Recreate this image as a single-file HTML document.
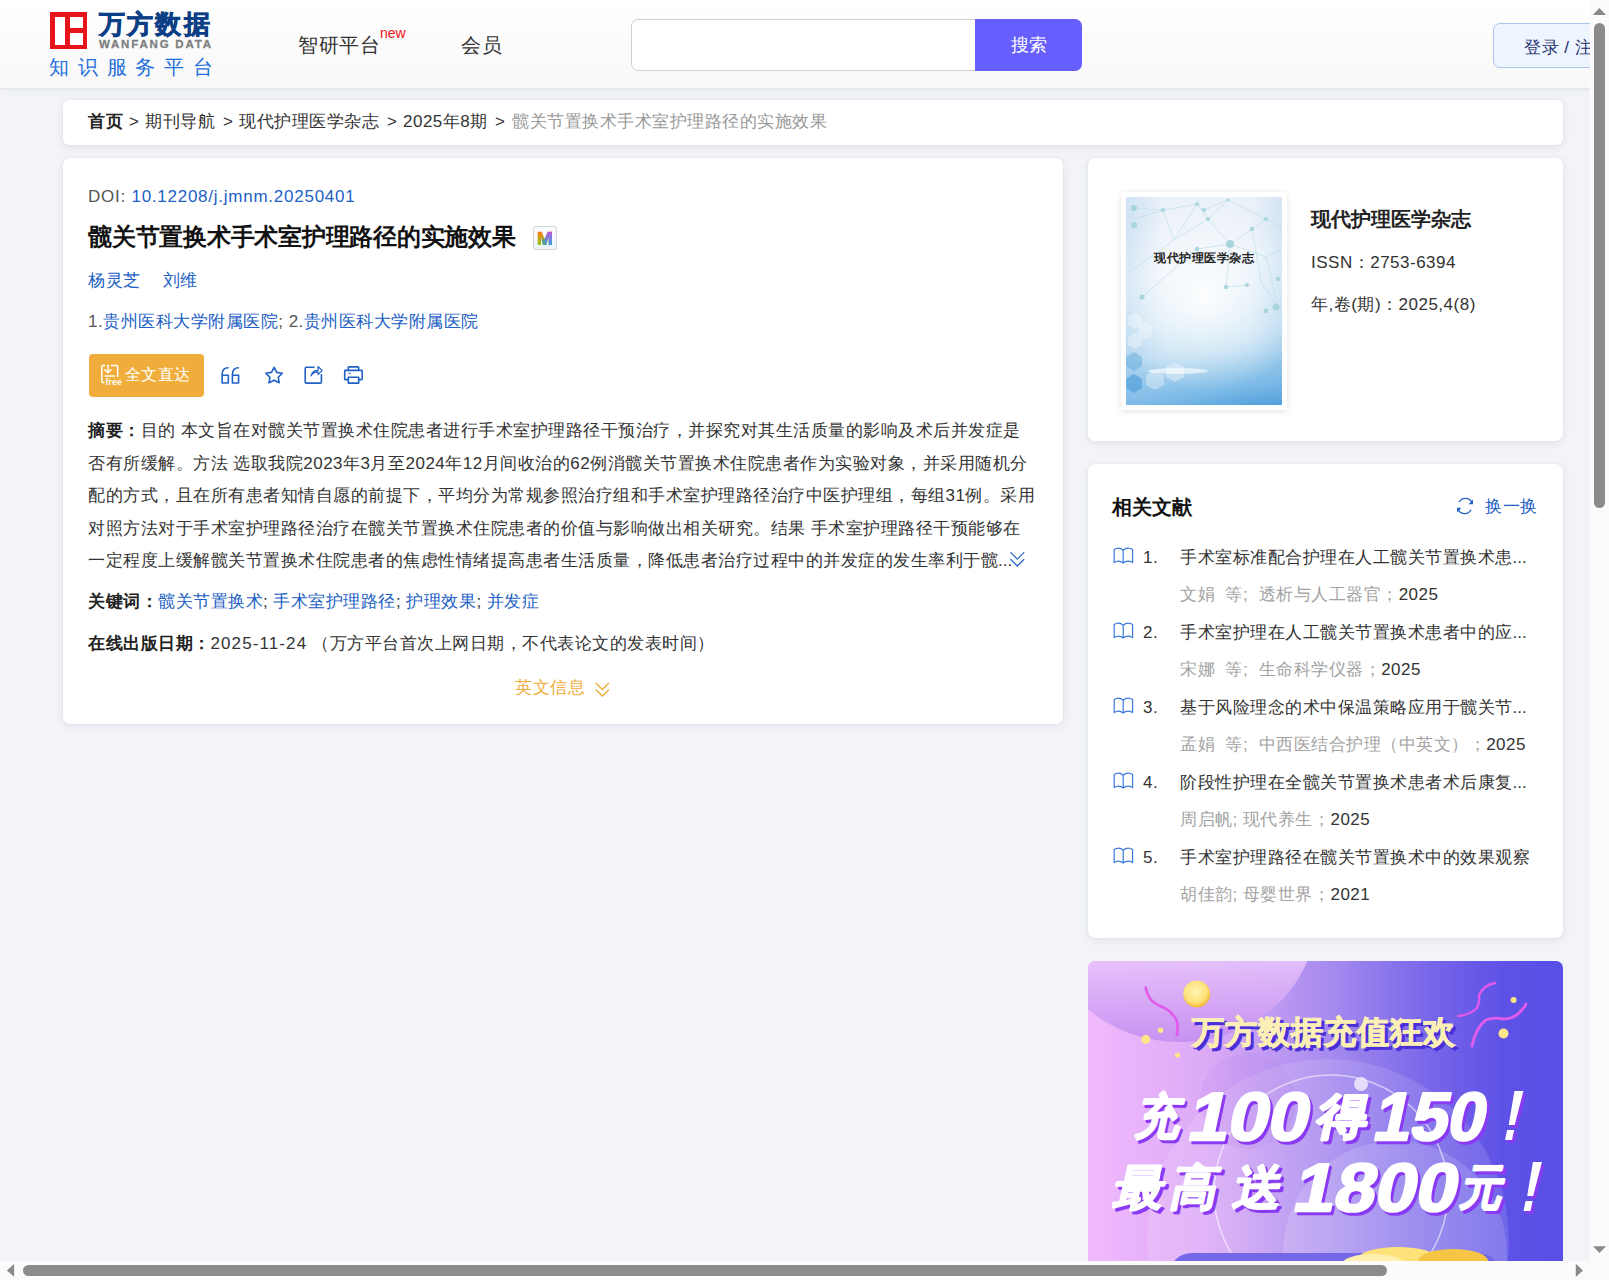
<!DOCTYPE html>
<html><head><meta charset="utf-8">
<style>
*{margin:0;padding:0;box-sizing:border-box}
html,body{width:1609px;height:1280px;overflow:hidden}
body{background:#f2f4f8;font-family:"Liberation Sans",sans-serif;color:#333;position:relative;font-size:17.5px}
.abs{position:absolute;white-space:nowrap}
#hdr{position:absolute;left:0;top:0;width:1590px;height:88px;background:linear-gradient(#ffffff,#f8f8f9);box-shadow:0 0 2px rgba(20,30,60,0.08),0 1px 8px rgba(20,30,60,0.07)}
.card{position:absolute;background:#fff;border-radius:7px;box-shadow:0 0 2px rgba(20,30,60,0.07),0 2px 9px rgba(20,30,60,0.08)}
.blue{color:#2160c4}
.gray{color:#999}
.ab{left:88px;line-height:32.5px;color:#333}
.t17{font-size:17px;letter-spacing:0.5px}
body{text-spacing-trim:space-all}
</style></head><body>
<div id="hdr">
  <!-- logo -->
  <div class="abs" style="left:50px;top:12px;width:37px;height:37px;background:#e7141b"></div>
  <div class="abs" style="left:54.5px;top:16.5px;width:10.5px;height:28px;background:#fff"></div>
  <div class="abs" style="left:69.5px;top:16.5px;width:13.5px;height:11.5px;background:#fff"></div>
  <div class="abs" style="left:69.5px;top:32.5px;width:13.5px;height:12px;background:#fff"></div>
  <div class="abs" style="left:99px;top:4px;font-size:26px;font-weight:bold;color:#0d3f86;line-height:40px;letter-spacing:2.2px;-webkit-text-stroke:0.7px #0d3f86">万方数据</div>
  <div class="abs" style="left:99px;top:37px;font-size:11.5px;font-weight:bold;color:#7f7f7f;letter-spacing:1.8px;line-height:14px;-webkit-text-stroke:0.3px #7f7f7f">WANFANG DATA</div>
  <div class="abs" style="left:49px;top:54px;font-size:19.5px;color:#1f6fd9;letter-spacing:8.8px;line-height:26px">知识服务平台</div>
  <!-- nav -->
  <div class="abs" style="left:298px;top:31px;font-size:20px;letter-spacing:0.6px;color:#333;line-height:28px">智研平台</div>
  <div class="abs" style="left:380px;top:25px;font-size:14px;color:#f01010;line-height:16px">new</div>
  <div class="abs" style="left:461px;top:31px;font-size:20px;letter-spacing:0.5px;color:#333;line-height:28px">会员</div>
  <!-- search -->
  <div class="abs" style="left:631px;top:19px;width:350px;height:52px;border:1px solid #cfcfcf;border-radius:7px 0 0 7px;background:#fff"></div>
  <div class="abs" style="left:975px;top:19px;width:107px;height:52px;background:#665ffd;border-radius:0 7px 7px 0;color:#fff;font-size:17.5px;line-height:52px;text-align:center">搜索</div>
  <!-- login -->
  <div class="abs" style="left:1493px;top:23px;width:140px;height:45px;background:#eef5fe;border:1px solid #a9c4ee;border-radius:7px;color:#1f2e6e;font-size:17px;letter-spacing:0.5px;line-height:47px;padding-left:30px">登录 / 注册</div>
</div>

<!-- breadcrumb -->
<div class="card" style="left:63px;top:100px;width:1500px;height:45px;border-radius:6px"></div>
<div class="abs t17" style="left:88px;top:108px;line-height:28px;color:#222"><b>首页</b></div>
<div class="abs t17" style="left:129px;top:108px;line-height:28px;color:#333">&gt;</div>
<div class="abs t17" style="left:145px;top:108px;line-height:28px;color:#333">期刊导航</div>
<div class="abs t17" style="left:223px;top:108px;line-height:28px;color:#333">&gt;</div>
<div class="abs t17" style="left:239px;top:108px;line-height:28px;color:#333">现代护理医学杂志</div>
<div class="abs t17" style="left:387px;top:108px;line-height:28px;color:#333">&gt;</div>
<div class="abs t17" style="left:403px;top:108px;line-height:28px;color:#333">2025年8期</div>
<div class="abs t17" style="left:495px;top:108px;line-height:28px;color:#333">&gt;</div>
<div class="abs t17" style="left:512px;top:108px;line-height:28px;color:#999">髋关节置换术手术室护理路径的实施效果</div>

<!-- main card -->
<div class="card" style="left:63px;top:158px;width:1000px;height:566px"></div>
<div class="abs t17" style="left:88px;top:183px;line-height:28px;color:#555;letter-spacing:0.75px">DOI: <span class="blue">10.12208/j.jmnm.20250401</span></div>
<div class="abs" style="left:88px;top:220px;line-height:34px;font-size:24px;letter-spacing:-0.25px;font-weight:bold;color:#111">髋关节置换术手术室护理路径的实施效果</div>
<div class="abs" style="left:534px;top:226px;width:23px;height:24px;border:1px solid #ddd;border-radius:3px;background:linear-gradient(#fff,#f3f3f3)"></div>
<div class="abs t17" style="left:88px;top:267px;line-height:28px"><span class="blue">杨灵芝</span><span class="blue" style="margin-left:22px">刘维</span></div>
<div class="abs t17" style="left:88px;top:308px;line-height:28px;color:#555">1.<span class="blue">贵州医科大学附属医院</span>; 2.<span class="blue">贵州医科大学附属医院</span></div>
<div class="abs" style="left:89px;top:354px;width:115px;height:43px;background:#f0ad3b;border-radius:4px"></div>
<div class="abs" style="left:125px;top:361px;line-height:28px;font-size:16px;letter-spacing:0.25px;color:#fff">全文直达</div>
<div class="abs t17 ab" style="top:415.0px"><b style="color:#222">摘要：</b>目的 本文旨在对髋关节置换术住院患者进行手术室护理路径干预治疗，并探究对其生活质量的影响及术后并发症是</div>
<div class="abs t17 ab" style="top:447.5px">否有所缓解。方法 选取我院2023年3月至2024年12月间收治的62例消髋关节置换术住院患者作为实验对象，并采用随机分</div>
<div class="abs t17 ab" style="top:480.0px">配的方式，且在所有患者知情自愿的前提下，平均分为常规参照治疗组和手术室护理路径治疗中医护理组，每组31例。采用</div>
<div class="abs t17 ab" style="top:512.5px">对照方法对于手术室护理路径治疗在髋关节置换术住院患者的价值与影响做出相关研究。结果 手术室护理路径干预能够在</div>
<div class="abs t17 ab" style="top:545.0px">一定程度上缓解髋关节置换术住院患者的焦虑性情绪提高患者生活质量，降低患者治疗过程中的并发症的发生率利于髋<span style="letter-spacing:0">...</span></div>
<div class="abs t17" style="left:88px;top:588px;line-height:28px;color:#333"><b style="color:#222">关键词：</b><span class="blue">髋关节置换术</span>; <span class="blue">手术室护理路径</span>; <span class="blue">护理效果</span>; <span class="blue">并发症</span></div>
<div class="abs t17" style="left:88px;top:630px;line-height:28px;color:#333"><b style="color:#222">在线出版日期：</b><span style="letter-spacing:1.1px">2025-11-24</span> （万方平台首次上网日期，不代表论文的发表时间）</div>
<div class="abs t17" style="left:515px;top:674px;line-height:28px;color:#f0ad3b">英文信息</div>

<!-- icons -->
<svg class="abs" style="left:0;top:0" width="1609" height="800" viewBox="0 0 1609 800" fill="none">
  <!-- free doc icon -->
  <g stroke="#fff" stroke-width="1.5" stroke-linecap="round" stroke-linejoin="round">
    <path d="M104.8 365.6 H103 Q101.8 365.6 101.8 366.8 V381.3 Q101.8 382.5 103 382.5 H103.8"/>
    <path d="M111.2 365.6 H116.5 Q117.7 365.6 117.7 366.8 V376.4"/>
    <path d="M107.9 365.3 V372.3 M104.6 369.8 L107.9 372.6 L111.1 369.8"/>
    <path d="M105.2 376 H114.4"/>
  </g>
  <text x="105.6" y="384.6" fill="#fff" font-family="Liberation Sans" font-weight="bold" font-size="8.6" letter-spacing="0.1">free</text>
  <!-- quote 66 -->
  <g stroke="#2160c4" stroke-width="1.6" stroke-linejoin="round">
    <path d="M228.6 367.8 Q222.1 367.6 222.1 374.5 V383 H228.3 V375.2 H222.1"/>
    <path d="M238.9 367.8 Q232.4 367.6 232.4 374.5 V383 H238.6 V375.2 H232.4"/>
  </g>
  <!-- star -->
  <path d="M274.1 367.3 L276.7 372.4 L282.3 373.2 L278.3 377.3 L279.2 382.8 L274.1 380.3 L269 382.8 L269.9 377.3 L265.9 373.2 L271.5 372.4 Z" stroke="#2160c4" stroke-width="1.6" stroke-linejoin="round"/>
  <!-- share -->
  <g stroke="#2160c4" stroke-width="1.6" stroke-linejoin="round" stroke-linecap="round">
    <path d="M314 367.3 H306.2 Q305.2 367.3 305.2 368.3 V382.2 Q305.2 383.1 306.2 383.1 H320.4 Q321.4 383.1 321.4 382.2 V374.8"/>
  </g>
  <path d="M311 375.8 Q312.5 370.3 318 370.3 V366.5 L322.2 370.6 L318 374.6 V371.9 Q313.8 371.6 311 375.8 Z" stroke="#2160c4" stroke-width="1.2" stroke-linejoin="round" fill="none"/>
  <!-- print -->
  <g stroke="#2160c4" stroke-width="1.6" stroke-linejoin="round">
    <path d="M348.3 370.4 V367.6 Q348.3 366.9 349 366.9 H358 Q358.7 366.9 358.7 367.6 V370.4"/>
    <path d="M348.3 379.6 H345.3 Q344.7 379.6 344.7 379 V371 Q344.7 370.4 345.3 370.4 H361.6 Q362.2 370.4 362.2 371 V379 Q362.2 379.6 361.6 379.6 H358.7"/>
    <path d="M348.3 377.3 H358.7 V383.1 H348.3 Z"/>
    <path d="M348.5 373.3 H350.6" stroke-width="1.2"/>
  </g>
  <!-- abstract expand chevron -->
  <g stroke="#2a6ad0" stroke-width="1.3" stroke-linecap="round" stroke-linejoin="miter">
    <path d="M1010.8 552.6 L1017.3 559.1 L1023.8 552.6"/>
    <path d="M1010.8 559.5 L1017.3 566 L1023.8 559.5"/>
  </g>
  <!-- english info chevron -->
  <g stroke="#f0ad3b" stroke-width="1.4" stroke-linecap="round">
    <path d="M596.2 683.3 L602.4 689.4 L608.6 683.3"/>
    <path d="M596.2 689.9 L602.4 696 L608.6 689.9"/>
  </g>
</svg>
<!-- M icon -->
<div class="abs" style="left:533px;top:226px;width:24px;height:24px;border:1.5px solid #d6d6d6;border-radius:3px;background:linear-gradient(#fbfcff,#eef3fb)"></div>
<svg class="abs" style="left:537px;top:231px" width="16" height="15" viewBox="0 0 16 15">
  <defs>
   <linearGradient id="mg1" x1="0" y1="0" x2="0" y2="1"><stop offset="0" stop-color="#ff7a10"/><stop offset="1" stop-color="#8cc820"/></linearGradient>
   <linearGradient id="mg2" x1="0" y1="0" x2="0" y2="1"><stop offset="0" stop-color="#b45ad8"/><stop offset="1" stop-color="#3ea0e8"/></linearGradient>
  </defs>
  <path d="M0.7 0.8 H4.6 L7.6 8 L10.8 0.8 H14.9 V14 H11.6 V6.2 L9.2 14 H6 L4 6.4 V14 H0.7 Z" fill="url(#mg1)"/>
  <path d="M10.8 0.8 H14.9 V14 H11.6 V6.2 L9.2 14 H7.6 L7.6 8 Z" fill="url(#mg2)"/>
  <path d="M6 14 L4.6 8.5 L7.6 8 L9.2 14 Z" fill="#55a090"/>
</svg>

<!-- right card 1 -->
<div class="card" style="left:1088px;top:158px;width:475px;height:283px"></div>
<div class="abs" style="left:1121px;top:192px;width:166px;height:218px;background:#fff;box-shadow:0 1px 6px rgba(0,0,0,0.12)"></div>
<div class="abs" style="left:1126px;top:197px;width:156px;height:208px;overflow:hidden;background:radial-gradient(ellipse 70% 45% at 50% 48%,rgba(255,255,255,0.95),rgba(255,255,255,0) 100%),linear-gradient(90deg,rgba(120,180,230,0.25),rgba(120,180,230,0) 25%,rgba(120,180,230,0) 80%,rgba(120,180,230,0.2)),linear-gradient(170deg,#edf2f9 0%,#e9f0f8 35%,#bcdcf1 70%,#7ab9e6 90%,#4c9ddc 100%)">
  <svg class="abs" style="left:0;top:0" width="156" height="208" viewBox="0 0 156 208">
    <g stroke="#bfe0e8" stroke-width="0.7" fill="none">
      <path d="M8 11 L37 13 L71 7 L78 13 L102 3 L140 22 L158 32 M37 13 L48 43 L71 7 M37 13 L8 22 M71 7 L82 22 L102 3 M82 22 L104 47 L126 32 L140 22 M48 43 L82 22 M48 43 L0 78 M104 47 L71 52 L16 100 M104 47 L140 60 L158 50 M104 47 L100 90 L121 88 M140 60 L152 110 M126 32 L135 85 L158 120"/>
    </g>
    <g fill="#a8d6df">
      <circle cx="8" cy="11" r="3"/><circle cx="8" cy="28" r="3"/><circle cx="37" cy="13" r="2"/><circle cx="71" cy="7" r="2"/><circle cx="78" cy="13" r="2"/><circle cx="102" cy="3" r="1.6"/><circle cx="82" cy="22" r="2"/><circle cx="104" cy="47" r="4"/><circle cx="126" cy="32" r="2.2"/><circle cx="140" cy="22" r="2"/><circle cx="71" cy="52" r="2.2"/><circle cx="16" cy="100" r="2.6"/><circle cx="100" cy="90" r="2.2"/><circle cx="121" cy="88" r="2"/><circle cx="152" cy="82" r="2.2"/><circle cx="150" cy="110" r="3.5"/><circle cx="140" cy="114" r="2.4"/><circle cx="110" cy="57" r="1.8"/>
    </g>
    <g fill="#ffffff" opacity="0.35">
      <path d="M2 120 l7 -4 l7 4 v8 l-7 4 l-7 -4z"/><path d="M12 130 l7 -4 l7 4 v8 l-7 4 l-7 -4z"/><path d="M2 140 l7 -4 l7 4 v8 l-7 4 l-7 -4z"/><path d="M20 178 l9 -5 l9 5 v10 l-9 5 l-9 -5z"/><path d="M40 170 l9 -5 l9 5 v10 l-9 5 l-9 -5z"/>
    </g>
    <g fill="#3f97d8" opacity="0.55">
      <path d="M0 160 l8 -5 l8 5 v9 l-8 5 l-8 -5z" opacity="0.6"/><path d="M0 182 l8 -5 l8 5 v9 l-8 5 l-8 -5z"/>
    </g>
    <ellipse cx="52" cy="174" rx="30" ry="3" fill="#ffffff" opacity="0.6"/>
  </svg>
</div>
<div class="abs" style="left:1154px;top:248px;line-height:20px;font-size:12px;letter-spacing:0.5px;font-weight:bold;color:#222">现代护理医学杂志</div>
<div class="abs" style="left:1311px;top:204px;line-height:30px;font-size:20px;font-weight:bold;color:#222">现代护理医学杂志</div>
<div class="abs t17" style="left:1311px;top:249px;line-height:28px;color:#333">ISSN：2753-6394</div>
<div class="abs t17" style="left:1311px;top:291px;line-height:28px;color:#333">年,卷(期)：2025,4(8)</div>

<!-- right card 2 -->
<div class="card" style="left:1088px;top:464px;width:475px;height:474px"></div>
<div class="abs" style="left:1112px;top:492px;line-height:30px;font-size:20px;font-weight:bold;color:#111">相关文献</div>
<svg class="abs" style="left:1455px;top:496px" width="20" height="20" viewBox="0 0 20 20" fill="none">
  <path d="M17.2 7.2 A7.2 7.2 0 0 0 4 6.2" stroke="#2160c4" stroke-width="1.3"/>
  <path d="M2.8 12.8 A7.2 7.2 0 0 0 16 13.8" stroke="#2160c4" stroke-width="1.3"/>
  <path d="M18 3.6 L18 8.2 L13.6 8.2 Z" fill="#2160c4"/>
  <path d="M2 16.4 L2 11.8 L6.4 11.8 Z" fill="#2160c4"/>
</svg>
<div class="abs t17 blue" style="left:1485px;top:493px;line-height:28px">换一换</div>
<svg class="abs" style="left:1112px;top:547px" width="22" height="18" viewBox="0 0 22 18" fill="none"><path d="M11.2 3.2 Q7 -0.6 2.2 2.6 V15.6 Q7 12.6 11.2 16 Q15.4 12.6 20.6 15.6 V2.6 Q15.4 -0.6 11.2 3.2 Z M11.2 3.2 V16" stroke="#3a78dc" stroke-width="1.2" stroke-linejoin="round"/></svg>
<div class="abs t17" style="left:1143px;top:544px;line-height:28px;color:#333">1.</div>
<div class="abs t17" style="left:1180px;top:544px;line-height:28px;color:#333">手术室标准配合护理在人工髋关节置换术患<span style="letter-spacing:0">...</span></div>
<div class="abs t17" style="left:1180px;top:581px;line-height:28px;color:#a3a3a3">文娟&nbsp;&nbsp;等;&nbsp;&nbsp;透析与人工器官；<span style="color:#333">2025</span></div>
<svg class="abs" style="left:1112px;top:622px" width="22" height="18" viewBox="0 0 22 18" fill="none"><path d="M11.2 3.2 Q7 -0.6 2.2 2.6 V15.6 Q7 12.6 11.2 16 Q15.4 12.6 20.6 15.6 V2.6 Q15.4 -0.6 11.2 3.2 Z M11.2 3.2 V16" stroke="#3a78dc" stroke-width="1.2" stroke-linejoin="round"/></svg>
<div class="abs t17" style="left:1143px;top:619px;line-height:28px;color:#333">2.</div>
<div class="abs t17" style="left:1180px;top:619px;line-height:28px;color:#333">手术室护理在人工髋关节置换术患者中的应<span style="letter-spacing:0">...</span></div>
<div class="abs t17" style="left:1180px;top:656px;line-height:28px;color:#a3a3a3">宋娜&nbsp;&nbsp;等;&nbsp;&nbsp;生命科学仪器；<span style="color:#333">2025</span></div>
<svg class="abs" style="left:1112px;top:697px" width="22" height="18" viewBox="0 0 22 18" fill="none"><path d="M11.2 3.2 Q7 -0.6 2.2 2.6 V15.6 Q7 12.6 11.2 16 Q15.4 12.6 20.6 15.6 V2.6 Q15.4 -0.6 11.2 3.2 Z M11.2 3.2 V16" stroke="#3a78dc" stroke-width="1.2" stroke-linejoin="round"/></svg>
<div class="abs t17" style="left:1143px;top:694px;line-height:28px;color:#333">3.</div>
<div class="abs t17" style="left:1180px;top:694px;line-height:28px;color:#333">基于风险理念的术中保温策略应用于髋关节<span style="letter-spacing:0">...</span></div>
<div class="abs t17" style="left:1180px;top:731px;line-height:28px;color:#a3a3a3">孟娟&nbsp;&nbsp;等;&nbsp;&nbsp;中西医结合护理（中英文）；<span style="color:#333">2025</span></div>
<svg class="abs" style="left:1112px;top:772px" width="22" height="18" viewBox="0 0 22 18" fill="none"><path d="M11.2 3.2 Q7 -0.6 2.2 2.6 V15.6 Q7 12.6 11.2 16 Q15.4 12.6 20.6 15.6 V2.6 Q15.4 -0.6 11.2 3.2 Z M11.2 3.2 V16" stroke="#3a78dc" stroke-width="1.2" stroke-linejoin="round"/></svg>
<div class="abs t17" style="left:1143px;top:769px;line-height:28px;color:#333">4.</div>
<div class="abs t17" style="left:1180px;top:769px;line-height:28px;color:#333">阶段性护理在全髋关节置换术患者术后康复<span style="letter-spacing:0">...</span></div>
<div class="abs t17" style="left:1180px;top:806px;line-height:28px;color:#a3a3a3">周启帆; 现代养生；<span style="color:#333">2025</span></div>
<svg class="abs" style="left:1112px;top:847px" width="22" height="18" viewBox="0 0 22 18" fill="none"><path d="M11.2 3.2 Q7 -0.6 2.2 2.6 V15.6 Q7 12.6 11.2 16 Q15.4 12.6 20.6 15.6 V2.6 Q15.4 -0.6 11.2 3.2 Z M11.2 3.2 V16" stroke="#3a78dc" stroke-width="1.2" stroke-linejoin="round"/></svg>
<div class="abs t17" style="left:1143px;top:844px;line-height:28px;color:#333">5.</div>
<div class="abs t17" style="left:1180px;top:844px;line-height:28px;color:#333">手术室护理路径在髋关节置换术中的效果观察</div>
<div class="abs t17" style="left:1180px;top:881px;line-height:28px;color:#a3a3a3">胡佳韵; 母婴世界；<span style="color:#333">2021</span></div>

<!-- banner -->
<div class="abs" style="left:1088px;top:961px;width:475px;height:300px;border-radius:7px 7px 0 0;overflow:hidden;background:linear-gradient(90deg,#f1b9fd 0%,#dcaaf6 25%,#a88cef 50%,#7866e9 72%,#5d51e6 88%,#5a4fe5 100%)">
  <svg class="abs" style="left:0;top:0" width="475" height="300" viewBox="0 0 475 300">
    <defs>
      <linearGradient id="bgE" gradientUnits="userSpaceOnUse" x1="0" y1="0" x2="0" y2="82"><stop offset="0" stop-color="#e6c2fb"/><stop offset="1" stop-color="#c48df0"/></linearGradient>
      <radialGradient id="coin" cx="0.45" cy="0.4" r="0.6"><stop offset="0" stop-color="#fff3b0"/><stop offset="0.7" stop-color="#fde27a"/><stop offset="1" stop-color="#f2b735"/></radialGradient>
    </defs>
    <ellipse cx="92" cy="-41" rx="135" ry="122" fill="url(#bgE)" opacity="0.9"/>
    <circle cx="240" cy="279" r="181" fill="#ffffff" opacity="0.12"/>
    <circle cx="307" cy="292" r="112" fill="#ffffff" opacity="0.14"/>
    <circle cx="160" cy="140" r="48" fill="#8a5ae0" opacity="0.07"/>
    
    <circle cx="243" cy="231" r="117" fill="none" stroke="#ffffff" stroke-width="1.6" opacity="0.55"/>
    <circle cx="273" cy="123" r="7" fill="#ece4fc" opacity="0.9"/>
    <circle cx="108.7" cy="33" r="13.5" fill="url(#coin)"/>
    <circle cx="57.7" cy="78.4" r="4.5" fill="#fde58a"/>
    <circle cx="72.5" cy="69.2" r="2.8" fill="#fde58a"/>
    <circle cx="89.5" cy="94" r="2.6" fill="#fde58a"/>
    <circle cx="425.6" cy="39" r="3" fill="#fde58a"/>
    <circle cx="415.5" cy="72.5" r="5" fill="#fde58a"/>
    <path d="M57.7 26.6 Q60 40 71 44.4 Q82 48 88 58 Q91 66 88.8 74" stroke="#e258ea" stroke-width="2.6" fill="none" stroke-linecap="round"/>
    <path d="M370 55 Q382 54 389 47 Q392 40 391 34 Q396 24 407 22" stroke="#e258ea" stroke-width="2.4" fill="none" stroke-linecap="round"/>
    <path d="M384 85 Q388 66 398 59 Q406 56 415 58 Q425 58 431 52 Q437 46 438 43" stroke="#e45cec" stroke-width="2.8" fill="none" stroke-linecap="round"/>
    <rect x="82" y="292" width="330" height="40" rx="22" fill="#7467e8"/>
    <ellipse cx="310" cy="298" rx="40" ry="12" fill="#fde27a"/>
    <ellipse cx="365" cy="300" rx="35" ry="12" fill="#f6c545"/>
    <ellipse cx="285" cy="302" rx="30" ry="9" fill="#fff0b0"/>
  </svg>
  <svg class="abs" style="left:0;top:0" width="475" height="300" viewBox="0 0 475 300">
<text x="106.5" y="85" font-family="Liberation Sans" font-weight="bold" font-size="32" fill="#4a30d8" stroke="#4a30d8" stroke-width="1" letter-spacing="1">万方数据充值狂欢</text>
<text x="104" y="82" font-family="Liberation Sans" font-weight="bold" font-size="32" fill="#fcefb5" stroke="#fcefb5" stroke-width="1" letter-spacing="1">万方数据充值狂欢</text>
<g transform="translate(49.2 175.4) skewX(-12)"><text x="0" y="0" font-family="Liberation Sans" font-weight="bold" font-size="48" fill="#8a3af3" stroke="#8a3af3" stroke-width="2.6" stroke-linejoin="round" textLength="44.0" lengthAdjust="spacingAndGlyphs">充</text></g>
<g transform="translate(100.0 182.1) skewX(-12)"><text x="0" y="0" font-family="Liberation Sans" font-weight="bold" font-size="68" fill="#8a3af3" stroke="#8a3af3" stroke-width="2.4" stroke-linejoin="round" textLength="120.5" lengthAdjust="spacingAndGlyphs">100</text></g>
<g transform="translate(229.5 175.4) skewX(-12)"><text x="0" y="0" font-family="Liberation Sans" font-weight="bold" font-size="48" fill="#8a3af3" stroke="#8a3af3" stroke-width="2.6" stroke-linejoin="round" textLength="51.0" lengthAdjust="spacingAndGlyphs">得</text></g>
<g transform="translate(285.5 182.1) skewX(-12)"><text x="0" y="0" font-family="Liberation Sans" font-weight="bold" font-size="68" fill="#8a3af3" stroke="#8a3af3" stroke-width="2.4" stroke-linejoin="round" textLength="111.4" lengthAdjust="spacingAndGlyphs">150</text></g>
<g transform="translate(419.5 182.1) skewX(-12)"><path d="M-1 -49 H8 L6.5 -15 H0.5 Z M0 -10 H7 V0 H0 Z" fill="#8a3af3"/></g>
<g transform="translate(46.7 172.4) skewX(-12)"><text x="0" y="0" font-family="Liberation Sans" font-weight="bold" font-size="48" fill="#ffffff" stroke="#ffffff" stroke-width="2.6" stroke-linejoin="round" textLength="44.0" lengthAdjust="spacingAndGlyphs">充</text></g>
<g transform="translate(97.5 179.1) skewX(-12)"><text x="0" y="0" font-family="Liberation Sans" font-weight="bold" font-size="68" fill="#ffffff" stroke="#ffffff" stroke-width="2.4" stroke-linejoin="round" textLength="120.5" lengthAdjust="spacingAndGlyphs">100</text></g>
<g transform="translate(227.0 172.4) skewX(-12)"><text x="0" y="0" font-family="Liberation Sans" font-weight="bold" font-size="48" fill="#ffffff" stroke="#ffffff" stroke-width="2.6" stroke-linejoin="round" textLength="51.0" lengthAdjust="spacingAndGlyphs">得</text></g>
<g transform="translate(283.0 179.1) skewX(-12)"><text x="0" y="0" font-family="Liberation Sans" font-weight="bold" font-size="68" fill="#ffffff" stroke="#ffffff" stroke-width="2.4" stroke-linejoin="round" textLength="111.4" lengthAdjust="spacingAndGlyphs">150</text></g>
<g transform="translate(417.0 179.1) skewX(-12)"><path d="M-1 -49 H8 L6.5 -15 H0.5 Z M0 -10 H7 V0 H0 Z" fill="#ffffff"/></g>
<g transform="translate(26.5 246.3) skewX(-12)"><text x="0" y="0" font-family="Liberation Sans" font-weight="bold" font-size="48" fill="#8a3af3" stroke="#8a3af3" stroke-width="1.9" stroke-linejoin="round" textLength="51.0" lengthAdjust="spacingAndGlyphs">最</text></g>
<g transform="translate(83.9 246.3) skewX(-12)"><text x="0" y="0" font-family="Liberation Sans" font-weight="bold" font-size="48" fill="#8a3af3" stroke="#8a3af3" stroke-width="1.9" stroke-linejoin="round" textLength="47.0" lengthAdjust="spacingAndGlyphs">高</text></g>
<g transform="translate(146.5 246.3) skewX(-12)"><text x="0" y="0" font-family="Liberation Sans" font-weight="bold" font-size="48" fill="#8a3af3" stroke="#8a3af3" stroke-width="1.9" stroke-linejoin="round" textLength="48.6" lengthAdjust="spacingAndGlyphs">送</text></g>
<g transform="translate(205.5 253.0) skewX(-12)"><text x="0" y="0" font-family="Liberation Sans" font-weight="bold" font-size="68" fill="#8a3af3" stroke="#8a3af3" stroke-width="2.4" stroke-linejoin="round" textLength="163.3" lengthAdjust="spacingAndGlyphs">1800</text></g>
<g transform="translate(373.9 246.3) skewX(-12)"><text x="0" y="0" font-family="Liberation Sans" font-weight="bold" font-size="48" fill="#8a3af3" stroke="#8a3af3" stroke-width="1.9" stroke-linejoin="round" textLength="43.0" lengthAdjust="spacingAndGlyphs">元</text></g>
<g transform="translate(438.0 253.0) skewX(-12)"><path d="M-1 -49 H8 L6.5 -15 H0.5 Z M0 -10 H7 V0 H0 Z" fill="#8a3af3"/></g>
<g transform="translate(24.0 243.3) skewX(-12)"><text x="0" y="0" font-family="Liberation Sans" font-weight="bold" font-size="48" fill="#ffffff" stroke="#ffffff" stroke-width="1.9" stroke-linejoin="round" textLength="51.0" lengthAdjust="spacingAndGlyphs">最</text></g>
<g transform="translate(81.4 243.3) skewX(-12)"><text x="0" y="0" font-family="Liberation Sans" font-weight="bold" font-size="48" fill="#ffffff" stroke="#ffffff" stroke-width="1.9" stroke-linejoin="round" textLength="47.0" lengthAdjust="spacingAndGlyphs">高</text></g>
<g transform="translate(144.0 243.3) skewX(-12)"><text x="0" y="0" font-family="Liberation Sans" font-weight="bold" font-size="48" fill="#ffffff" stroke="#ffffff" stroke-width="1.9" stroke-linejoin="round" textLength="48.6" lengthAdjust="spacingAndGlyphs">送</text></g>
<g transform="translate(203.0 250.0) skewX(-12)"><text x="0" y="0" font-family="Liberation Sans" font-weight="bold" font-size="68" fill="#ffffff" stroke="#ffffff" stroke-width="2.4" stroke-linejoin="round" textLength="163.3" lengthAdjust="spacingAndGlyphs">1800</text></g>
<g transform="translate(371.4 243.3) skewX(-12)"><text x="0" y="0" font-family="Liberation Sans" font-weight="bold" font-size="48" fill="#ffffff" stroke="#ffffff" stroke-width="1.9" stroke-linejoin="round" textLength="43.0" lengthAdjust="spacingAndGlyphs">元</text></g>
<g transform="translate(435.5 250.0) skewX(-12)"><path d="M-1 -49 H8 L6.5 -15 H0.5 Z M0 -10 H7 V0 H0 Z" fill="#ffffff"/></g>
  </svg>
</div>

<!-- scrollbars -->
<div class="abs" style="left:1590px;top:0;width:19px;height:1261px;background:#fbfbfb"></div>
<div class="abs" style="left:1594px;top:23px;width:11px;height:485px;background:#8b8b8b;border-radius:5.5px"></div>
<div class="abs" style="left:0;top:1261px;width:1609px;height:19px;background:#fbfbfb"></div>
<div class="abs" style="left:23px;top:1265px;width:1364px;height:11px;background:#8b8b8b;border-radius:5.5px"></div>
<svg class="abs" style="left:0;top:0" width="1609" height="1280" viewBox="0 0 1609 1280">
  <path d="M1592.8 15 L1599.4 8.1 L1606 15 Z" fill="#8a8a8a"/>
  <path d="M1593 1246.2 L1599.5 1253 L1606 1246.2 Z" fill="#8a8a8a"/>
  <path d="M1575.8 1263.8 L1583 1270.4 L1575.8 1277 Z" fill="#8a8a8a"/>
  <path d="M14.1 1264 L6.9 1270.4 L14.1 1276.8 Z" fill="#8a8a8a"/>
</svg>
</body></html>
